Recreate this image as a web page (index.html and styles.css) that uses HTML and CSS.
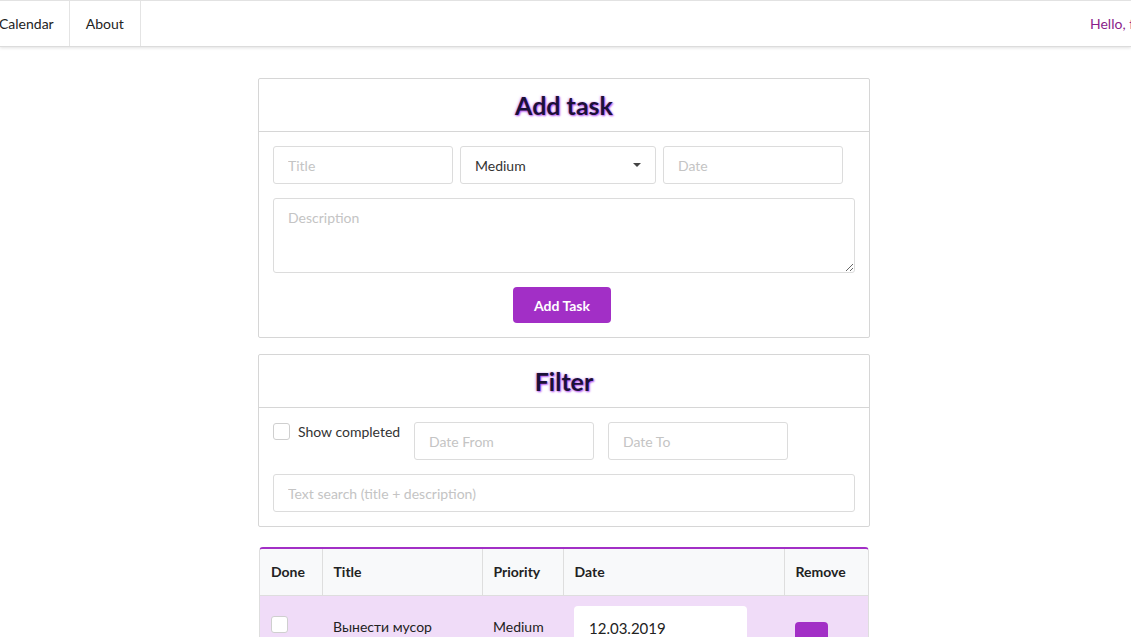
FILE: index.html
```html
<!DOCTYPE html>
<html>
<head>
<meta charset="utf-8">
<link rel="stylesheet" href="styles.css">
</head>
<body>
<nav class="navbar">
  <div class="nav-left">
    <a class="nav-link">Calendar</a>
    <a class="nav-link">About</a>
  </div>
  <div class="nav-right">
    <span class="hello">Hello, friend</span>
  </div>
</nav>
<main class="container">
  <section class="card">
    <h2 class="card-title">Add task</h2>
    <div class="card-body">
      <div class="row">
        <input class="field w180" type="text" placeholder="Title">
        <div class="field select w196"><span>Medium</span><span class="caret"></span></div>
        <input class="field w180" type="text" placeholder="Date">
      </div>
      <textarea class="field textarea" placeholder="Description"></textarea>
      <div class="center"><button class="btn">Add Task</button></div>
    </div>
  </section>
  <section class="card">
    <h2 class="card-title">Filter</h2>
    <div class="card-body filter-body">
      <div class="row filter-row">
        <label class="check"><span class="box"></span>Show completed</label>
        <input class="field w180" type="text" placeholder="Date From">
        <input class="field w180" type="text" placeholder="Date To">
      </div>
      <input class="field full" type="text" placeholder="Text search (title + description)">
    </div>
  </section>
  <div class="table-wrap">
    <table class="tasks">
      <thead>
        <tr>
          <th class="c-done">Done</th>
          <th class="c-title">Title</th>
          <th class="c-prio">Priority</th>
          <th class="c-date">Date</th>
          <th class="c-rem">Remove</th>
        </tr>
      </thead>
      <tbody>
        <tr>
          <td><span class="box"></span></td>
          <td>Вынести мусор</td>
          <td>Medium</td>
          <td><div class="date-cell">12.03.2019</div></td>
          <td><span class="rm-btn"></span></td>
        </tr>
      </tbody>
    </table>
  </div>
</main>
</body>
</html>
```
FILE: styles.css
```css
* { box-sizing: border-box; }
html, body { margin: 0; padding: 0; overflow: hidden; }
body {
  font-family: Lato, "Open Sans", sans-serif;
  font-size: 14px;
  color: #212529;
  background: #fff;
  width: 1131px;
  height: 637px;
}
.navbar {
  height: 47px;
  border-top: 1px solid #e2e2e2;
  border-bottom: 1px solid #dcdcdc;
  box-shadow: 0 1px 3px rgba(0,0,0,0.12);
  display: flex;
  justify-content: space-between;
  align-items: stretch;
  overflow: hidden;
}
.nav-left { display: flex; margin-left: -17px; }
.nav-link {
  display: flex;
  align-items: center;
  padding: 0 15px 0 16px;
  border-right: 1px solid #e4e4e4;
  color: #222;
  font-size: 14px;
}
.nav-link + .nav-link { padding: 0 16px 0 16px; }
.nav-right { display: flex; align-items: center; width: 41px; overflow: hidden; white-space: nowrap; }
.hello { color: #8a1c8a; font-size: 14px; }

.container {
  width: 612px;
  margin: 31px 0 0 258px;
  display: flex;
  flex-direction: column;
}
.card {
  border: 1px solid #d6d6d6;
  border-radius: 2px;
  margin-bottom: 16px;
}
.card-title {
  margin: 0;
  height: 53px;
  border-bottom: 1px solid #d6d6d6;
  text-align: center;
  font-size: 25px;
  font-weight: 700;
  line-height: 52px;
  color: #1b1038;
  text-shadow: 1px 1px 2px #b04cf0, -1px 0 2px rgba(176,76,240,0.5);
}
.card-body { padding: 14px 14px 14px 14px; }
.row { display: flex; gap: 7px; }
.field {
  height: 38px;
  border: 1px solid #dcdcdc;
  border-radius: 3px;
  padding: 0 14px;
  font-family: Lato, sans-serif;
  font-size: 14px;
  color: #333;
  background: #fff;
  outline: none;
}
.field::placeholder { color: #c4c4c4; }
.w180 { width: 180px; }
.w196 { width: 196px; }
.select {
  display: flex;
  align-items: center;
  justify-content: space-between;
  color: #333;
}
.caret {
  width: 0; height: 0;
  border-left: 4px solid transparent;
  border-right: 4px solid transparent;
  border-top: 4px solid #444;
  margin-right: 0px;
}
.textarea {
  display: block;
  width: 582px;
  height: 75px;
  margin-top: 14px;
  padding: 10px 14px;
  resize: vertical;
}
.center { display: flex; justify-content: center; margin-top: 14px; padding-right: 4px; }
.btn {
  width: 98px;
  height: 36px;
  background: #a22fc6;
  color: #fff;
  border: none;
  border-radius: 4px;
  font-family: Lato, sans-serif;
  font-weight: 700;
  font-size: 14px;
}
.filter-row { gap: 14px; align-items: flex-start; }
.filter-body .filter-row { margin-bottom: 14px; }
.check {
  display: flex;
  align-items: center;
  gap: 8px;
  color: #333;
  font-size: 14px;
  margin-top: 1px;
  width: 127px;
  white-space: nowrap;
}
.box {
  display: inline-block;
  flex: none;
  width: 17px;
  height: 17px;
  border: 1px solid #cfcfcf;
  border-radius: 3px;
  background: #fff;
}
.full { width: 582px; display: block; }

.table-wrap {
  margin: 4px 1px 0 1px;
  border-top: 2px solid #a22fc6;
  border-radius: 4px 4px 0 0;
  border-left: 1px solid #dedede;
  border-right: 1px solid #dedede;
  overflow: hidden;
}
.tasks {
  width: 100%;
  border-collapse: collapse;
  font-size: 14px;
}
.tasks th {
  background: #f8f9fa;
  height: 46px;
  text-align: left;
  font-weight: 700;
  padding: 0 11px;
  border-left: 1px solid #dedede;
  border-bottom: 1px solid #dedede;
  color: #222;
}
.tasks th:first-child { border-left: none; }
.c-done { width: 62px; }
.c-title { width: 160px; }
.c-prio { width: 81px; }
.c-date { width: 221px; }
.tasks td {
  background: #f0dcf8;
  height: 60px;
  padding: 10px 11px 0;
  vertical-align: top;
  color: #222;
}
.tasks td:nth-child(2), .tasks td:nth-child(3) { padding-top: 22px; }
.tasks td:first-child { padding-top: 20px; }
.date-cell {
  background: #fff;
  border-radius: 4px;
  height: 40px;
  width: 173px;
  padding: 13px 15px 0;
  font-size: 15px;
  color: #222;
}
.rm-btn {
  display: inline-block;
  width: 33px;
  height: 20px;
  margin-top: 16px;
  background: #a22fc6;
  border-radius: 4px 4px 0 0;
}
```
